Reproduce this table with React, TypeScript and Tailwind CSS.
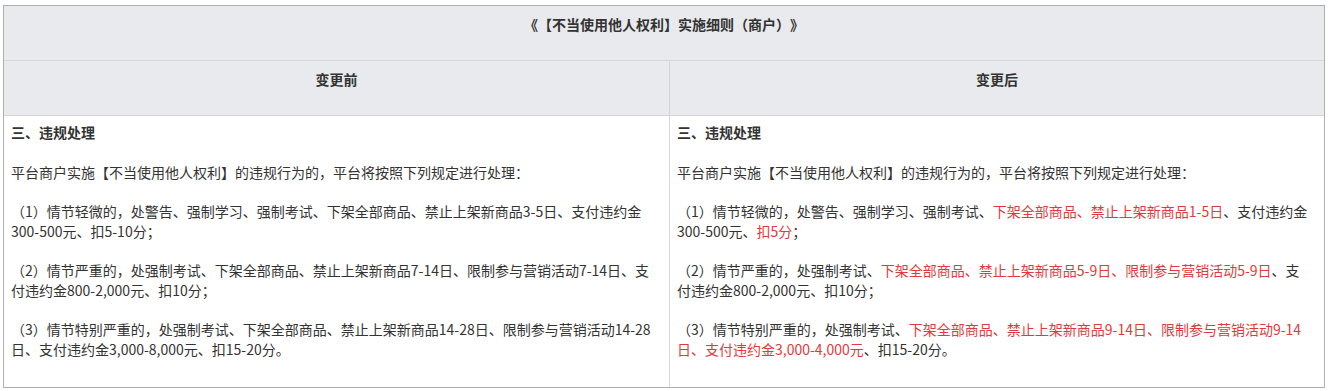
import React from "react";

const R = ({ children }: { children: React.ReactNode }) => (
  <span className="text-[#e4393c]">{children}</span>
);

function P({ children, bold }: { children: React.ReactNode; bold?: boolean }) {
  return <p className={`mb-[20px] ${bold ? "font-bold" : ""}`}>{children}</p>;
}

export default function App() {
  return (
    <div className="min-h-[391px] bg-white pl-[3px] pt-[5px]">
      <div className="w-[1322px] border border-[#b0b0b0] text-[14px] text-[#333] [text-spacing-trim:space-all] font-['Microsoft_YaHei','Noto_Sans_CJK_SC',sans-serif]">
        <div className="h-[54px] bg-[#e9eaed] pt-[8px] text-center font-bold leading-[20px]">
          《【不当使用他人权利】实施细则（商户）》
        </div>
        <div className="grid h-[55px] grid-cols-[666px_1fr] border-t border-[#d6d6d6] bg-[#e9eaed] leading-[20px] font-bold">
          <div className="border-r border-[#d6d6d6] pt-[8px] text-center">变更前</div>
          <div className="pt-[8px] text-center">变更后</div>
        </div>
        <div className="grid h-[272px] grid-cols-[666px_1fr] border-t border-[#d6d6d6] leading-[19.5px]">
          <div className="border-r border-[#d6d6d6] px-[7px] pt-[7px]">
            <P bold>三、违规处理</P>
            <P>平台商户实施【不当使用他人权利】的违规行为的，平台将按照下列规定进行处理：</P>
            <P>（1）情节轻微的，处警告、强制学习、强制考试、下架全部商品、禁止上架新商品3-5日、支付违约金300-500元、扣5-10分；</P>
            <P>（2）情节严重的，处强制考试、下架全部商品、禁止上架新商品7-14日、限制参与营销活动7-14日、支付违约金800-2,000元、扣10分；</P>
            <P>（3）情节特别严重的，处强制考试、下架全部商品、禁止上架新商品14-28日、限制参与营销活动14-28日、支付违约金3,000-8,000元、扣15-20分。</P>
          </div>
          <div className="pl-[7px] pr-[15px] pt-[7px]">
            <P bold>三、违规处理</P>
            <P>平台商户实施【不当使用他人权利】的违规行为的，平台将按照下列规定进行处理：</P>
            <P>
              （1）情节轻微的，处警告、强制学习、强制考试、<R>下架全部商品、禁止上架新商品1-5日</R>、支付违约金300-500元、<R>扣5分</R>；
            </P>
            <P>
              （2）情节严重的，处强制考试、<R>下架全部商品、禁止上架新商品5-9日、限制参与营销活动5-9日</R>、支付违约金800-2,000元、扣10分；
            </P>
            <P>
              （3）情节特别严重的，处强制考试、<R>下架全部商品、禁止上架新商品9-14日、限制参与营销活动9-14日、支付违约金3,000-4,000元</R>、扣15-20分。
            </P>
          </div>
        </div>
      </div>
    </div>
  );
}
